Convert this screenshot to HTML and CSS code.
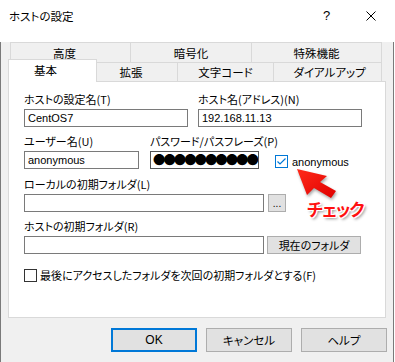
FILE: index.html
```html
<!DOCTYPE html>
<html lang="ja">
<head>
    <meta charset="UTF-8">
    <title>ホストの設定</title>
    <link rel="stylesheet" href="styles.css">
</head>
<body>

<div class="window">
    <div class="titlebar">
        <span class="title">ホストの設定</span>
        <span class="cap-btn help">?</span>
        <span class="cap-btn">
            <svg width="10" height="10" viewBox="0 0 10 10">
                <path d="M0.5 0.5 L9.5 9.5 M9.5 0.5 L0.5 9.5" stroke="#000" stroke-width="1" fill="none"/>
            </svg>
        </span>
    </div>

    <div class="client">
        <div class="tabs tabs-back">
            <div class="tab t-high">高度</div>
            <div class="tab t-crypt">暗号化</div>
            <div class="tab t-special last">特殊機能</div>
        </div>
        <div class="tabs tabs-front">
            <div class="tab t-basic active">基本</div>
            <div class="tab t-ext">拡張</div>
            <div class="tab t-code">文字コード</div>
            <div class="tab t-dial last">ダイアルアップ</div>
        </div>

        <div class="panel">
            <div class="row">
                <div class="field w-half">
                    <div class="label">ホストの設定名(T)</div>
                    <div class="input">CentOS7</div>
                </div>
                <div class="field w-half">
                    <div class="label">ホスト名(アドレス)(N)</div>
                    <div class="input">192.168.11.13</div>
                </div>
            </div>

            <div class="row row-user">
                <div class="field w-user">
                    <div class="label">ユーザー名(U)</div>
                    <div class="input">anonymous</div>
                </div>
                <div class="field w-pass">
                    <div class="label">パスワード/パスフレーズ(P)</div>
                    <div class="input pw">●●●●●●●●●●</div>
                </div>
                <div class="check-item anon">
                    <svg class="cb" width="13" height="13" viewBox="0 0 13 13">
                        <rect x="0.5" y="0.5" width="12" height="12" fill="#fff" stroke="#0078d7"/>
                        <path d="M2.5 6.5 L5 9 L10.5 3.5" stroke="#0078d7" stroke-width="1.2" fill="none"/>
                    </svg>
                    <span class="cb-text">anonymous</span>
                </div>
            </div>

            <div class="row-block r-local">
                <div class="label">ローカルの初期フォルダ(L)</div>
                <div class="line">
                    <div class="input w-path"></div>
                    <div class="btn btn-dots">...</div>
                </div>
            </div>

            <div class="row-block r-host">
                <div class="label">ホストの初期フォルダ(R)</div>
                <div class="line">
                    <div class="input w-path"></div>
                    <div class="btn btn-cur">現在のフォルダ</div>
                </div>
            </div>

            <div class="check-item last-folder">
                <svg class="cb" width="13" height="13" viewBox="0 0 13 13">
                    <rect x="0.5" y="0.5" width="12" height="12" fill="#fff" stroke="#333"/>
                </svg>
                <span class="cb-label">最後にアクセスしたフォルダを次回の初期フォルダとする(F)</span>
            </div>
        </div>

        <div class="buttons">
            <div class="btn btn-main default">OK</div>
            <div class="btn btn-main">キャンセル</div>
            <div class="btn btn-main">ヘルプ</div>
        </div>
    </div>

    <!-- annotation -->
    <svg class="arrow" width="48" height="38" viewBox="0 0 48 38">
        <defs>
            <linearGradient id="redGrad" x1="0" y1="0" x2="1" y2="1">
                <stop offset="0" stop-color="#ff2a1a"/>
                <stop offset="1" stop-color="#e00000"/>
            </linearGradient>
        </defs>
        <polygon points="5,5 35,12 28,18 44,27 39,34 22,24 15,31" fill="url(#redGrad)"/>
    </svg>
    <div class="note">チェック</div>
</div>

</body>
</html>
```
FILE: styles.css
```css
body {
    margin: 0;
    width: 395px;
    height: 362px;
    overflow: hidden;
    background: #ffffff;
    font-family: "Noto Sans CJK JP", sans-serif;
    font-size: 11px;
    font-feature-settings: "palt";
    color: #000;
}
.window {
    width: 394px;
    position: relative;
}
.titlebar {
    height: 31px;
    display: flex;
    align-items: center;
    background: #fff;
}
.title {
    flex: 1;
    padding-left: 9px;
    font-size: 11.5px;
}
.cap-btn {
    width: 46px;
    height: 31px;
    display: flex;
    align-items: center;
    justify-content: center;
}
.cap-btn.help {
    font-family: "Liberation Sans", sans-serif;
    font-size: 13px;
    padding-left: 3px;
    box-sizing: border-box;
}
.client {
    height: 331px;
    box-sizing: border-box;
    background: #f0f0f0;
    border: 1px solid #7a7a7a;
    border-top: none;
}

/* tabs */
.tabs {
    display: flex;
}
.tabs-back {
    margin: 11px 0 0 9px;
    height: 20px;
}
.tabs-front {
    margin: -3px 0 0 7px;
    height: 22px;
    align-items: flex-end;
}
.tab {
    box-sizing: border-box;
    border: 1px solid #d9d9d9;
    border-bottom: none;
    border-right: none;
    background: #f0f0f0;
    display: flex;
    align-items: center;
    justify-content: center;
    height: 20px;
    font-size: 11.5px;
}
.tab.last {
    border-right: 1px solid #d9d9d9;
}
.tabs-front .tab {
    height: 19px;
}
.t-high { width: 120px; padding-right: 12px; }
.t-crypt { width: 121px; }
.t-special { width: 131px; }
.t-basic { width: 89px; padding-right: 14px; }
.t-ext { width: 80px; padding-right: 12px; border-left: none; }
.t-code { width: 96px; }
.t-dial { width: 109px; padding-left: 4px; }
.tabs-front .tab.active {
    height: 23px;
    margin-bottom: -1px;
    padding-bottom: 3px;
    background: #fff;
    border-right: 1px solid #d9d9d9;
    position: relative;
    z-index: 1;
}

/* panel */
.panel {
    box-sizing: border-box;
    margin-left: 7px;
    width: 378px;
    height: 237px;
    background: #fff;
    border: 1px solid #d9d9d9;
    padding: 10px 0 0 15px;
}
.row {
    display: flex;
    gap: 10px;
}
.row-user {
    margin-top: 7px;
    gap: 11px;
    align-items: flex-end;
}
.label {
    line-height: 15px;
    height: 15px;
    margin-bottom: 2px;
    white-space: nowrap;
}
.input {
    box-sizing: border-box;
    height: 18px;
    border: 1px solid #7a7a7a;
    background: #fff;
    font-family: "Liberation Sans", sans-serif;
    font-size: 11px;
    line-height: 16px;
    padding-left: 3px;
    white-space: nowrap;
    overflow: hidden;
}
.w-half { width: 164px; }
.w-user { width: 115px; }
.w-pass { width: 109px; }
.w-path { width: 240px; }
.input.pw {
    font-family: "Noto Sans CJK JP", sans-serif;
    font-size: 12.4px;
    letter-spacing: -2px;
    line-height: 16px;
    padding-left: 2px;
    border-color: #555;
}
.check-item {
    display: flex;
    align-items: center;
    gap: 4px;
}
.cb {
    display: block;
    flex: none;
}
.anon {
    margin-left: 5px;
    margin-bottom: 1px;
}
.cb-text {
    font-family: "Liberation Sans", sans-serif;
    font-size: 11px;
}
.r-local {
    margin-top: 8px;
}
.r-host {
    margin-top: 7px;
}
.line {
    display: flex;
    gap: 4px;
}
.r-host .line {
    gap: 3px;
}
.last-folder {
    margin-top: 13px;
    gap: 3px;
}

/* buttons */
.btn {
    box-sizing: border-box;
    background: #e1e1e1;
    border: 1px solid #adadad;
    display: flex;
    align-items: center;
    justify-content: center;
}
.btn-dots {
    width: 18px;
    height: 18px;
    font-family: "Liberation Sans", sans-serif;
    font-size: 10px;
}
.btn-cur {
    width: 94px;
    height: 18px;
}
.buttons {
    display: flex;
    gap: 9px;
    margin: 10px 0 0 110px;
}
.btn-main {
    width: 86px;
    height: 24px;
    font-size: 11.5px;
}
.btn-main.default {
    border: 2px solid #0078d7;
    font-family: "Liberation Sans", sans-serif;
    font-size: 12px;
}

/* annotation over the dialog */
.arrow {
    position: absolute;
    left: 292px;
    top: 164px;
    filter: drop-shadow(1px 2px 1.5px rgba(0, 0, 0, 0.35));
}
.note {
    position: absolute;
    left: 307px;
    top: 196px;
    font-size: 17px;
    font-weight: bold;
    color: #ff1010;
    letter-spacing: -1px;
    text-shadow:
        -1px 0 0 #fff, 1px 0 0 #fff, 0 -1px 0 #fff, 0 1px 0 #fff,
        -1px -1px 0 #fff, 1px 1px 0 #fff, -1px 1px 0 #fff, 1px -1px 0 #fff,
        2px 2px 3px rgba(0, 0, 0, 0.45);
}
```
